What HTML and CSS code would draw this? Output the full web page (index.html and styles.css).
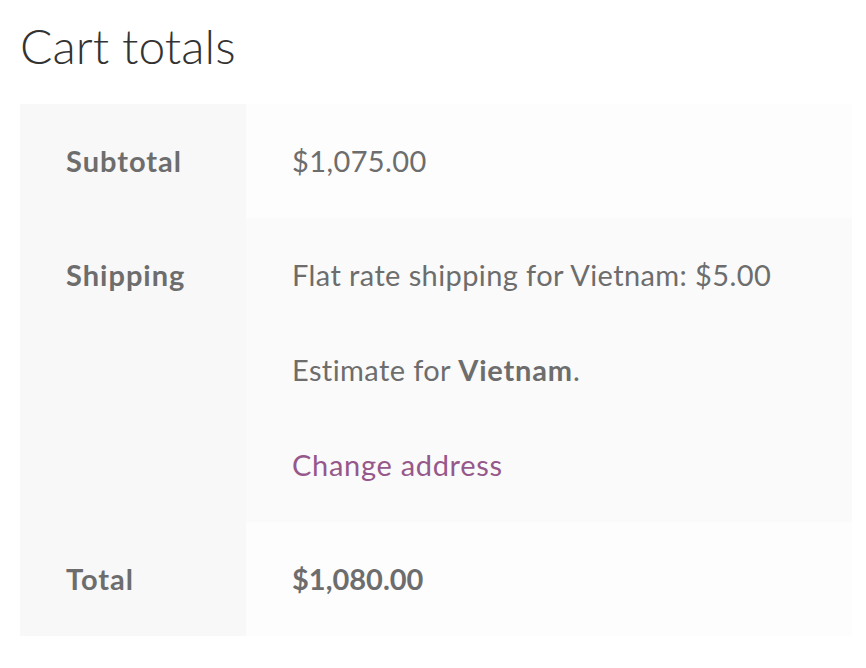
FILE: index.html
```html
<!DOCTYPE html>
<html lang="en">
<head>
<meta charset="utf-8">
<title>Cart totals</title>
<link rel="stylesheet" href="styles.css">
</head>
<body>
<div class="cart-collaterals">
  <h2 class="title">Cart totals</h2>
  <table class="totals">
    <tbody>
      <tr class="row-odd">
        <th>Subtotal</th>
        <td>$1,075.00</td>
      </tr>
      <tr class="row-even">
        <th>Shipping</th>
        <td>
          <p>Flat rate shipping for Vietnam: $5.00</p>
          <p>Estimate for <strong class="place">Vietnam</strong>.</p>
          <p><a href="#" class="change">Change address</a></p>
        </td>
      </tr>
      <tr class="row-odd">
        <th>Total</th>
        <td><strong>$1,080.00</strong></td>
      </tr>
    </tbody>
  </table>
</div>
</body>
</html>
```
FILE: styles.css
```css
html, body {
  margin: 0;
  padding: 0;
  background: #ffffff;
}
body {
  font-family: "Lato", "Liberation Sans", sans-serif;
  color: #6d6d6d;
}
.cart-collaterals {
  padding: 15px 14px 0 20px;
}
.title {
  margin: 0 0 27px 0;
  font-size: 48px;
  line-height: 62px;
  font-weight: 300;
  color: #333333;
}
.totals {
  width: 832px;
  border-collapse: collapse;
  border-spacing: 0;
  font-size: 29px;
  line-height: 42px;
  letter-spacing: 0.4px;
}
.totals th,
.totals td {
  padding: 36px 46px;
  text-align: left;
  vertical-align: top;
}
.totals th {
  width: 134px;
  background: #f8f8f8;
  font-weight: 700;
  letter-spacing: 1px;
}
.totals td {
  background: #fdfdfd;
}
.row-even td {
  background: #fafafa;
}
.totals p {
  margin: 0 0 53px 0;
}
.totals p:last-child {
  margin-bottom: 0;
}
.totals strong {
  font-weight: 700;
  letter-spacing: 0;
}
.totals .place {
  letter-spacing: 0.8px;
}
.change {
  color: #96588a;
  text-decoration: none;
  letter-spacing: 0.7px;
}
```
